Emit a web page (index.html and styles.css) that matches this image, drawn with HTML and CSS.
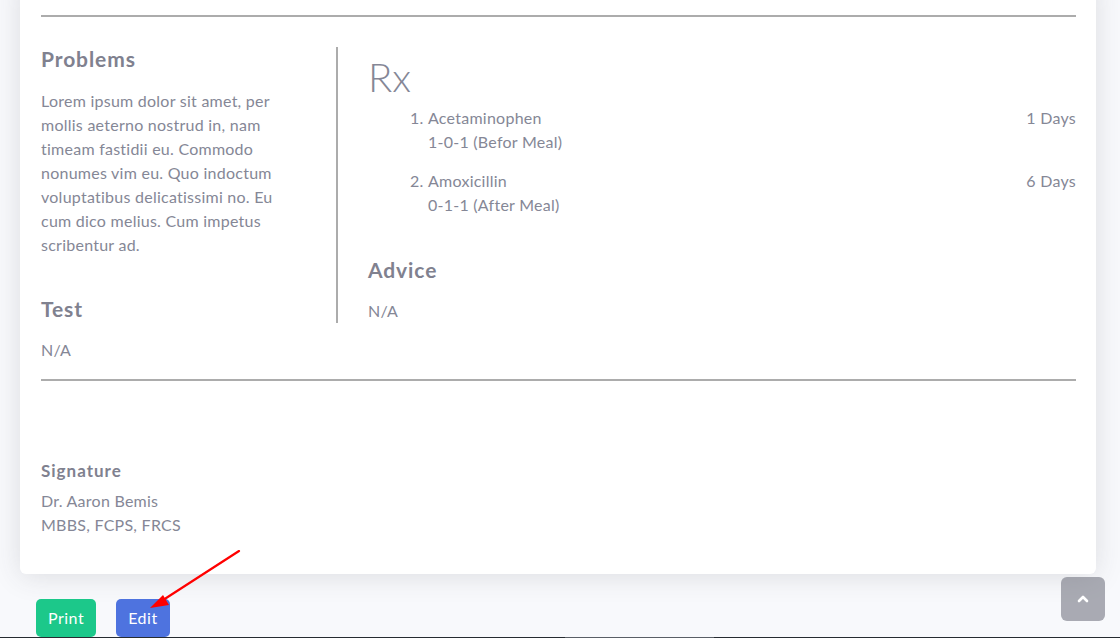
FILE: index.html
```html
<!DOCTYPE html>
<html lang="en">
<head>
<meta charset="utf-8">
<title>Prescription</title>
<link rel="stylesheet" href="styles.css">
</head>
<body>
<div class="page">
  <div class="card">
    <hr class="rule">
    <div class="cols">
      <div class="col-left">
        <h5 class="heading">Problems</h5>
        <p class="text problems">Lorem ipsum dolor sit amet, per mollis aeterno nostrud in, nam timeam fastidii eu. Commodo nonumes vim eu. Quo indoctum voluptatibus delicatissimi no. Eu cum dico melius. Cum impetus scribentur ad.</p>
        <h5 class="heading test">Test</h5>
        <p class="text na">N/A</p>
      </div>
      <div class="col-right">
        <div class="rx">Rx</div>
        <ol class="meds">
          <li class="med">
            <div class="med-row"><span>Acetaminophen</span><span>1 Days</span></div>
            <div>1-0-1 (Befor Meal)</div>
          </li>
          <li class="med">
            <div class="med-row"><span>Amoxicillin</span><span>6 Days</span></div>
            <div>0-1-1 (After Meal)</div>
          </li>
        </ol>
        <h5 class="heading advice">Advice</h5>
        <p class="text na">N/A</p>
      </div>
    </div>
    <hr class="rule">
    <div class="signature">
      <h6 class="sig-title">Signature</h6>
      <p class="text">Dr. Aaron Bemis<br>MBBS, FCPS, FRCS</p>
    </div>
  </div>
  <div class="actions">
    <button class="btn btn-print">Print</button>
    <button class="btn btn-edit">Edit</button>
  </div>
</div>

<svg class="arrow" width="100" height="70" viewBox="0 0 100 70">
  <line x1="89" y1="1" x2="10" y2="52" stroke="#ff0000" stroke-width="2.2" stroke-linecap="round"/>
  <polygon points="0,58 13,45 19,55" fill="#ff0000"/>
</svg>

<a class="scroll-top" href="#">
  <svg width="12" height="8" viewBox="0 0 12 8"><path d="M2 6 L6 2 L10 6" fill="none" stroke="#fff" stroke-width="2.6" stroke-linecap="round" stroke-linejoin="round"/></svg>
</a>

<div class="taskbar"></div>
</body>
</html>
```

FILE: styles.css
```css
* { box-sizing: border-box; }

html, body {
  margin: 0;
  height: 100%;
  overflow: hidden;
}

body {
  background: #f8f9fc;
  font-family: "Lato", "Open Sans", sans-serif;
  font-size: 16px;
  letter-spacing: 0.25px;
  line-height: 24px;
  color: #858796;
}

.page {
  padding: 0 24px 0 20px;
}

.card {
  margin-top: -20px;
  background: #fff;
  border-radius: 0 0 6px 6px;
  box-shadow: 0 2px 28px 0 rgba(58, 59, 69, 0.15);
  padding: 35px 20px 37px 21px;
}

.rule {
  margin: 0;
  border: 0;
  border-top: 2px solid #acacac;
}

.cols {
  display: grid;
  grid-template-columns: 295px 1fr;
  align-items: start;
  margin-top: 30px;
  margin-bottom: 17px;
}

.heading {
  margin: 0;
  font-size: 21px;
  letter-spacing: 0.9px;
  line-height: 24px;
  font-weight: 700;
  color: #80818f;
}

.text {
  margin: 0;
}

.problems {
  margin-top: 18px;
  width: 245px;
}

.test {
  margin-top: 40px;
}

.na {
  margin-top: 17px;
}

.col-right {
  border-left: 2px solid #acacac;
  padding-left: 30px;
}

.rx {
  font-size: 40px;
  letter-spacing: 0;
  line-height: 48px;
  font-weight: 300;
  color: #858796;
  margin-top: 6px;
}

.meds {
  margin: 5px 0 0;
  padding-left: 60px;
}

.med + .med {
  margin-top: 15px;
}

.med-row {
  display: flex;
  justify-content: space-between;
}

.advice {
  margin-top: 41px;
}

.signature {
  margin-top: 78px;
}

.sig-title {
  margin: 0 0 6px;
  font-size: 17px;
  letter-spacing: 1px;
  line-height: 24px;
  font-weight: 700;
  color: #80818f;
}

.actions {
  display: flex;
  gap: 20px;
  padding: 25px 0 0 16px;
}

.btn {
  font-family: inherit;
  font-size: 16px;
  letter-spacing: 0.5px;
  line-height: 24px;
  padding: 7px 12px;
  border: 0;
  border-radius: 5px;
  color: #fff;
}

.btn-print { background: #1cc88a; }
.btn-edit { background: #4e73df; }

.arrow {
  position: fixed;
  left: 150px;
  top: 550px;
}

.scroll-top {
  position: fixed;
  right: 15px;
  bottom: 17px;
  width: 44px;
  height: 44px;
  border-radius: 6px;
  background: rgba(90, 92, 105, 0.5);
  display: flex;
  align-items: center;
  justify-content: center;
}

.taskbar {
  position: fixed;
  left: 0;
  right: 0;
  bottom: 0;
  height: 1px;
  background: linear-gradient(to right, #262b31 0, #262b31 565px, #5a5f66 565px, #5a5f66 714px, #262b31 714px);
}
```
